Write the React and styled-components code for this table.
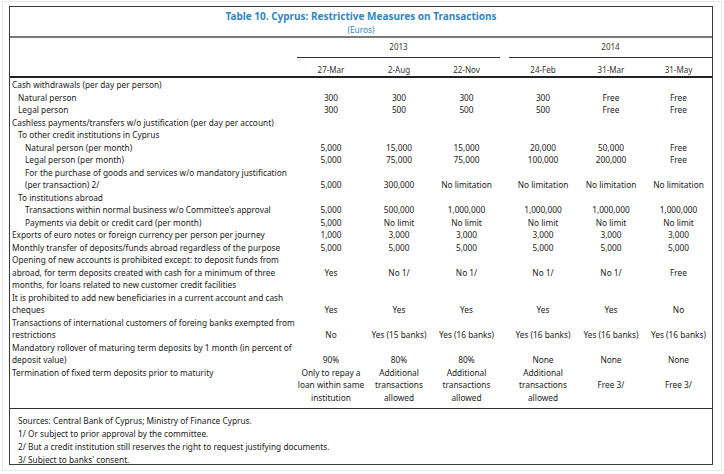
import React from "react";
import styled, { createGlobalStyle } from "styled-components";

const GlobalStyle = createGlobalStyle`
  html, body {
    margin: 0;
    padding: 0;
    background: #fff;
  }
  body {
    font-family: "Noto Sans", "Open Sans", sans-serif;
    color: #222;
  }
`;

const COLS = "287px 68px 68px 67px 9px 68px 68px 67px";

const Frame = styled.div`
  margin: 1px 2px;
  height: 470px;
  border: 1px solid #e6e6e6;
  box-sizing: border-box;
  padding: 4px 0 0 6px;
`;

const Box = styled.div`
  width: 704px;
  border: 1px solid #3a3a3a;
  box-sizing: border-box;
  background: #fff;
`;

const TitleBlock = styled.div`
  height: 31px;
  border-bottom: 2px solid #7a7a7a;
  box-sizing: border-box;
  display: flex;
  flex-direction: column;
  align-items: center;
  padding-top: 2px;
  color: #2f86c2;
`;

const Title = styled.div`
  font-weight: 700;
  font-size: 10px;
  line-height: 14px;
`;

const Subtitle = styled.div`
  font-size: 8.3px;
  line-height: 13px;
`;

const HeadGrid = styled.div`
  display: grid;
  grid-template-columns: ${COLS};
  grid-template-rows: 20px 18px;
  border-bottom: 2px solid #222;
  font-size: 8px;
  color: #333;
`;

const YearCell = styled.div`
  grid-column: ${(p) => p.$span};
  grid-row: 1;
  border-bottom: 1px solid #333;
  display: flex;
  align-items: center;
  justify-content: center;
  padding-bottom: 2px;
`;

const DateCell = styled.div`
  grid-row: 2;
  grid-column: ${(p) => p.$col};
  text-align: center;
  padding-top: 6px;
  line-height: 12.5px;
`;

const Body = styled.div`
  padding: 1px 0 4px;
  font-size: 8.3px;
  line-height: 12.5px;
  border-bottom: 1px solid #333;
`;

const Row = styled.div`
  display: grid;
  grid-template-columns: ${COLS};
`;

const Label = styled.div`
  padding-left: ${(p) => [2, 8, 15][p.$level]}px;
  white-space: nowrap;
`;

const Value = styled.div`
  grid-column: ${(p) => p.$col};
  align-self: ${(p) => p.$align};
  text-align: center;
  white-space: nowrap;
`;

const Footer = styled.div`
  height: 55px;
  overflow: hidden;
  padding: 5px 0 0 8px;
  box-sizing: border-box;
  font-size: 8.3px;
  line-height: 13px;
  color: #222;
`;

const dates = ["27-Mar", "2-Aug", "22-Nov", "24-Feb", "31-Mar", "31-May"];
const valueCols = [2, 3, 4, 6, 7, 8];

const rows = [
  { label: "Cash withdrawals (per day per person)", level: 0 },
  { label: "Natural person", level: 1, values: ["300", "300", "300", "300", "Free", "Free"] },
  { label: "Legal person", level: 1, values: ["300", "500", "500", "500", "Free", "Free"] },
  { label: "Cashless payments/transfers w/o justification (per day per account)", level: 0 },
  { label: "To other credit institutions in Cyprus", level: 1 },
  {
    label: "Natural person (per month)",
    level: 2,
    values: ["5,000", "15,000", "15,000", "20,000", "50,000", "Free"],
  },
  {
    label: "Legal person (per month)",
    level: 2,
    values: ["5,000", "75,000", "75,000", "100,000", "200,000", "Free"],
  },
  {
    label: ["For the purchase of goods and services w/o mandatory justification", "(per transaction) 2/"],
    level: 2,
    align: "end",
    values: ["5,000", "300,000", "No limitation", "No limitation", "No limitation", "No limitation"],
  },
  { label: "To institutions abroad", level: 1 },
  {
    label: "Transactions within normal business w/o Committee's approval",
    level: 2,
    values: ["5,000", "500,000", "1,000,000", "1,000,000", "1,000,000", "1,000,000"],
  },
  {
    label: "Payments via debit or credit card (per month)",
    level: 2,
    values: ["5,000", "No limit", "No limit", "No limit", "No limit", "No limit"],
  },
  {
    label: "Exports of euro notes or foreign currency per person per journey",
    level: 0,
    values: ["1,000", "3,000", "3,000", "3,000", "3,000", "3,000"],
  },
  {
    label: "Monthly transfer of deposits/funds abroad regardless of the purpose",
    level: 0,
    values: ["5,000", "5,000", "5,000", "5,000", "5,000", "5,000"],
  },
  {
    label: [
      "Opening of new accounts is prohibited except: to deposit funds from",
      "abroad, for term deposits created with cash for a minimum of three",
      "months, for loans related to new customer credit facilities",
    ],
    level: 0,
    align: "center",
    values: ["Yes", "No 1/", "No 1/", "No 1/", "No 1/", "Free"],
  },
  {
    label: ["It is prohibited to add new beneficiaries in a current account and cash", "cheques"],
    level: 0,
    align: "end",
    values: ["Yes", "Yes", "Yes", "Yes", "Yes", "No"],
  },
  {
    label: ["Transactions of international customers of foreing banks exempted from", "restrictions"],
    level: 0,
    align: "end",
    values: ["No", "Yes (15 banks)", "Yes (16 banks)", "Yes (16 banks)", "Yes (16 banks)", "Yes (16 banks)"],
  },
  {
    label: ["Mandatory rollover of maturing term deposits by 1 month (in percent of", "deposit value)"],
    level: 0,
    align: "end",
    values: ["90%", "80%", "80%", "None", "None", "None"],
  },
  {
    label: "Termination of fixed term deposits prior to maturity",
    level: 0,
    align: "center",
    values: [
      ["Only to repay a", "loan within same", "institution"],
      ["Additional", "transactions", "allowed"],
      ["Additional", "transactions", "allowed"],
      ["Additional", "transactions", "allowed"],
      "Free 3/",
      "Free 3/",
    ],
  },
];

const notes = [
  "Sources: Central Bank of Cyprus; Ministry of Finance Cyprus.",
  "1/ Or subject to prior approval by the committee.",
  "2/ But a credit institution still reserves the right to request justifying documents.",
  "3/ Subject to banks' consent.",
];

const Lines = ({ text }) =>
  Array.isArray(text) ? text.map((t, i) => <div key={i}>{t}</div>) : text;

const App = () => {
  return (
    <>
      <GlobalStyle />
      <Frame>
        <Box>
          <TitleBlock>
            <Title>Table 10. Cyprus: Restrictive Measures on Transactions</Title>
            <Subtitle>(Euros)</Subtitle>
          </TitleBlock>
          <HeadGrid>
            <YearCell $span="2 / 5">2013</YearCell>
            <YearCell $span="6 / 9">2014</YearCell>
            {dates.map((d, i) => (
              <DateCell key={d} $col={valueCols[i]}>
                {d}
              </DateCell>
            ))}
          </HeadGrid>
          <Body>
            {rows.map((row, i) => (
              <Row key={i}>
                <Label $level={row.level}>
                  <Lines text={row.label} />
                </Label>
                {row.values &&
                  row.values.map((v, j) => (
                    <Value key={j} $col={valueCols[j]} $align={row.align || "start"}>
                      <Lines text={v} />
                    </Value>
                  ))}
              </Row>
            ))}
          </Body>
          <Footer>
            {notes.map((n) => (
              <div key={n}>{n}</div>
            ))}
          </Footer>
        </Box>
      </Frame>
    </>
  );
};

export default App;
